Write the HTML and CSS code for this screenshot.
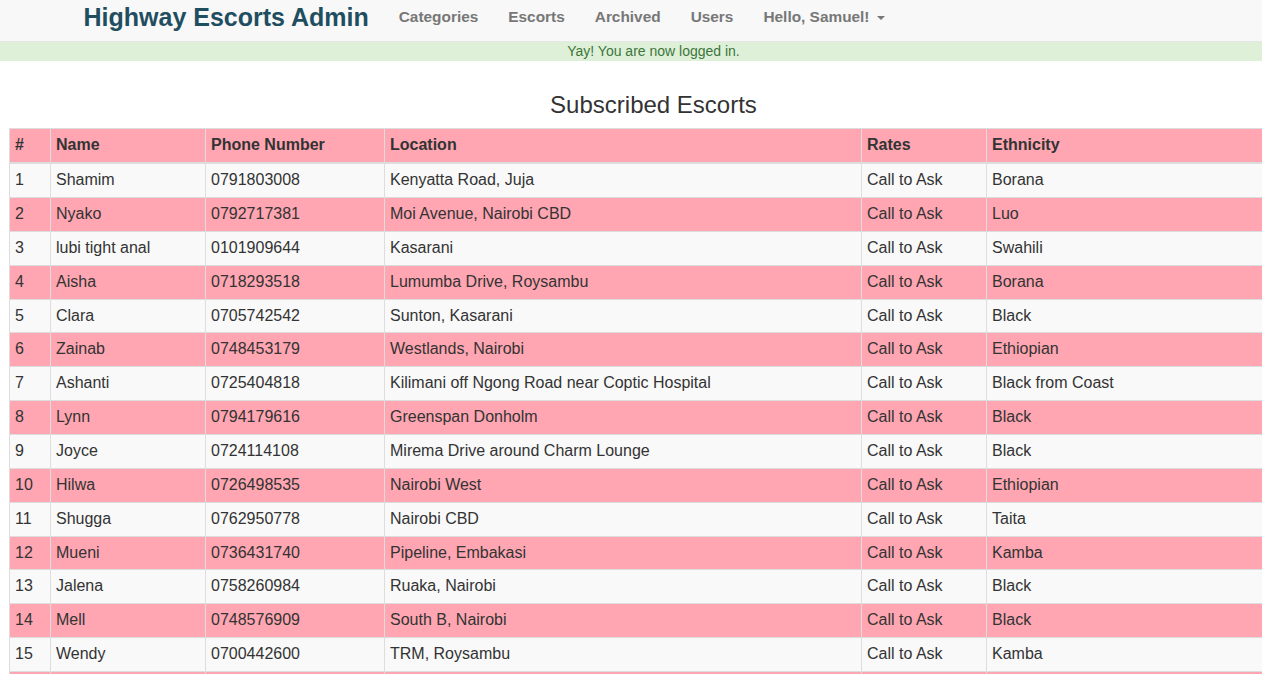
FILE: index.html
```html
<!DOCTYPE html>
<html lang="en">
<head>
<meta charset="utf-8">
<title>Highway Escorts Admin</title>
<link rel="stylesheet" href="styles.css">
</head>
<body>
<div class="page">
  <nav class="navbar">
    <div class="nav-container">
      <a class="brand" href="#">Highway Escorts Admin</a>
      <ul class="nav-links">
        <li><a href="#">Categories</a></li>
        <li><a href="#">Escorts</a></li>
        <li><a href="#">Archived</a></li>
        <li><a href="#">Users</a></li>
        <li><a href="#" class="dropdown">Hello, Samuel! <span class="caret"></span></a></li>
      </ul>
    </div>
  </nav>
  <div class="alert">Yay! You are now logged in.</div>
  <div class="content">
    <h3 class="title">Subscribed Escorts</h3>
    <table class="escorts">
      <colgroup>
        <col class="c-num"><col class="c-name"><col class="c-phone"><col class="c-loc"><col class="c-rate"><col class="c-eth">
      </colgroup>
      <thead>
        <tr><th>#</th><th>Name</th><th>Phone Number</th><th>Location</th><th>Rates</th><th>Ethnicity</th></tr>
      </thead>
      <tbody>
        <tr><td>1</td><td>Shamim</td><td>0791803008</td><td>Kenyatta Road, Juja</td><td>Call to Ask</td><td>Borana</td></tr>
        <tr><td>2</td><td>Nyako</td><td>0792717381</td><td>Moi Avenue, Nairobi CBD</td><td>Call to Ask</td><td>Luo</td></tr>
        <tr><td>3</td><td>lubi tight anal</td><td>0101909644</td><td>Kasarani</td><td>Call to Ask</td><td>Swahili</td></tr>
        <tr><td>4</td><td>Aisha</td><td>0718293518</td><td>Lumumba Drive, Roysambu</td><td>Call to Ask</td><td>Borana</td></tr>
        <tr><td>5</td><td>Clara</td><td>0705742542</td><td>Sunton, Kasarani</td><td>Call to Ask</td><td>Black</td></tr>
        <tr><td>6</td><td>Zainab</td><td>0748453179</td><td>Westlands, Nairobi</td><td>Call to Ask</td><td>Ethiopian</td></tr>
        <tr><td>7</td><td>Ashanti</td><td>0725404818</td><td>Kilimani off Ngong Road near Coptic Hospital</td><td>Call to Ask</td><td>Black from Coast</td></tr>
        <tr><td>8</td><td>Lynn</td><td>0794179616</td><td>Greenspan Donholm</td><td>Call to Ask</td><td>Black</td></tr>
        <tr><td>9</td><td>Joyce</td><td>0724114108</td><td>Mirema Drive around Charm Lounge</td><td>Call to Ask</td><td>Black</td></tr>
        <tr><td>10</td><td>Hilwa</td><td>0726498535</td><td>Nairobi West</td><td>Call to Ask</td><td>Ethiopian</td></tr>
        <tr><td>11</td><td>Shugga</td><td>0762950778</td><td>Nairobi CBD</td><td>Call to Ask</td><td>Taita</td></tr>
        <tr><td>12</td><td>Mueni</td><td>0736431740</td><td>Pipeline, Embakasi</td><td>Call to Ask</td><td>Kamba</td></tr>
        <tr><td>13</td><td>Jalena</td><td>0758260984</td><td>Ruaka, Nairobi</td><td>Call to Ask</td><td>Black</td></tr>
        <tr><td>14</td><td>Mell</td><td>0748576909</td><td>South B, Nairobi</td><td>Call to Ask</td><td>Black</td></tr>
        <tr><td>15</td><td>Wendy</td><td>0700442600</td><td>TRM, Roysambu</td><td>Call to Ask</td><td>Kamba</td></tr>
        <tr class="next-row"><td></td><td></td><td></td><td></td><td></td><td></td></tr>
      </tbody>
    </table>
  </div>
</div>
</body>
</html>
```

FILE: styles.css
```css
html, body {
  margin: 0;
  padding: 0;
  overflow: hidden;
}
body {
  font-family: "Liberation Sans", Arial, sans-serif;
  font-size: 14px;
  line-height: 1.428571;
  color: #333;
  background: #fff;
}
.page {
  width: 1307px;
}
.navbar {
  height: 42px;
  background: #f8f8f8;
  border-bottom: 1px solid #e7e7e7;
  box-sizing: border-box;
}
.nav-container {
  width: 1170px;
  margin: 0 auto;
  padding: 0 15px;
  box-sizing: border-box;
  display: flex;
  align-items: center;
  height: 34px;
}
.brand {
  font-size: 25px;
  font-weight: bold;
  color: #1f4e60;
  text-decoration: none;
  line-height: 34px;
  padding-right: 15px;
}
.nav-links {
  list-style: none;
  margin: 0;
  padding: 0;
  display: flex;
}
.nav-links a {
  display: block;
  padding: 0 15px;
  font-size: 15.4px;
  font-weight: bold;
  color: #777;
  text-decoration: none;
  line-height: 34px;
}
.caret {
  display: inline-block;
  width: 0;
  height: 0;
  margin-left: 3px;
  vertical-align: middle;
  border-top: 4px solid #777;
  border-left: 4px solid transparent;
  border-right: 4px solid transparent;
}
.alert {
  height: 19px;
  line-height: 19px;
  background: #dff0d8;
  color: #3c763d;
  text-align: center;
  font-size: 14px;
}
.content {
  padding: 0 9px;
}
.title {
  margin: 31px 0 10px;
  font-size: 24px;
  font-weight: normal;
  line-height: 1.1;
  text-align: center;
  color: #333;
}
.escorts {
  width: 1289px;
  table-layout: fixed;
  border-collapse: collapse;
  font-size: 16px;
  line-height: 1.428571;
}
.c-num { width: 41px; }
.c-name { width: 155px; }
.c-phone { width: 179px; }
.c-loc { width: 477px; }
.c-rate { width: 125px; }
.c-eth { width: 312px; }
.escorts th,
.escorts td {
  padding: 5px;
  border: 1px solid #ddd;
  text-align: left;
  vertical-align: top;
  white-space: nowrap;
}
.escorts th {
  font-weight: bold;
  border-bottom-width: 2px;
}
.escorts thead tr {
  background: #ffa6b2;
}
.escorts tbody tr:nth-child(odd) {
  background: #f9f9f9;
}
.escorts tbody tr:nth-child(even) {
  background: #ffa6b2;
}
.escorts tbody tr.next-row td {
  height: 22.857px;
}
```
